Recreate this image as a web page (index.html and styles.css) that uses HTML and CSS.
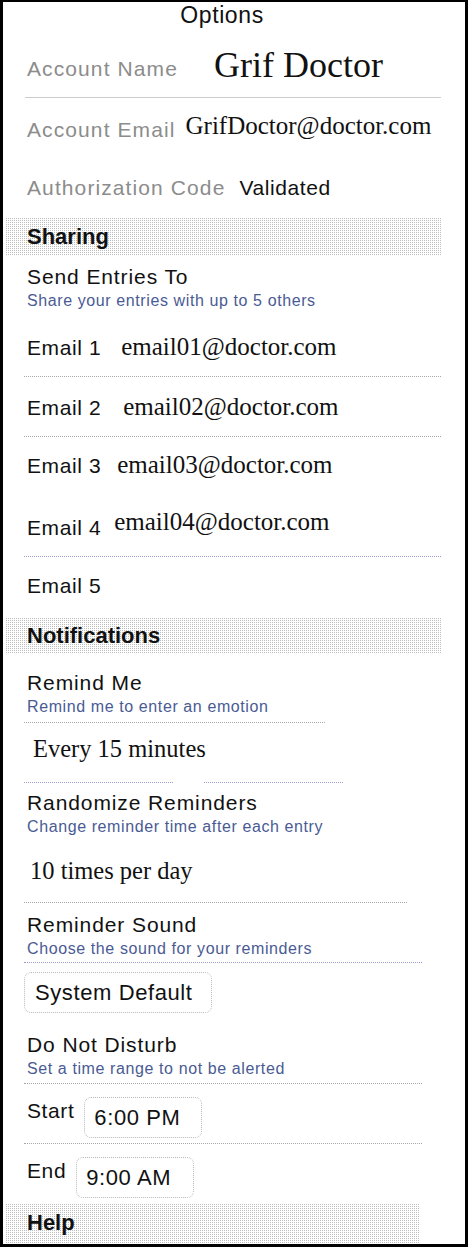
FILE: index.html
```html
<!DOCTYPE html>
<html lang="en">
<head>
    <title>Options</title>
    <link rel="stylesheet" href="styles.css">
</head>
<body>
    <div class="screen">
        <div class="title">Options</div>

        <div class="row row-name">
            <span class="label muted">Account Name</span>
            <span class="value value-name">Grif Doctor</span>
        </div>
        <div class="rule rule-solid"></div>
        <div class="row row-account">
            <span class="label muted">Account Email</span>
            <span class="value value-account">GrifDoctor@doctor.com</span>
        </div>
        <div class="row row-auth">
            <span class="label muted">Authorization Code</span>
            <span class="label value-text">Validated</span>
        </div>

        <div class="section section-sharing">Sharing</div>
        <div class="item item-send">
            <div class="item-title">Send Entries To</div>
            <div class="item-sub">Share your entries with up to 5 others</div>
        </div>
        <div class="row email">
            <span class="label">Email 1</span>
            <span class="value">email01@doctor.com</span>
        </div>
        <div class="rule"></div>
        <div class="row email row-e2">
            <span class="label">Email 2</span>
            <span class="value value-e2">email02@doctor.com</span>
        </div>
        <div class="rule"></div>
        <div class="row email row-e3">
            <span class="label">Email 3</span>
            <span class="value value-e3">email03@doctor.com</span>
        </div>
        <div class="row email">
            <span class="label">Email 4</span>
            <span class="value value-e4">email04@doctor.com</span>
        </div>
        <div class="rule rule-purple"></div>
        <div class="row email row-e5">
            <span class="label">Email 5</span>
        </div>

        <div class="section section-notify">Notifications</div>
        <div class="item item-remind">
            <div class="item-title">Remind Me</div>
            <div class="item-sub">Remind me to enter an emotion</div>
        </div>
        <div class="rule rule-short"></div>
        <div class="choice choice-every">Every 15 minutes</div>
        <div class="rule-pair">
            <div class="rule-part"></div>
            <div class="rule-part rule-part-b"></div>
        </div>
        <div class="item item-random">
            <div class="item-title">Randomize Reminders</div>
            <div class="item-sub">Change reminder time after each entry</div>
        </div>
        <div class="choice choice-times">10 times per day</div>
        <div class="rule rule-mid"></div>
        <div class="item item-sound">
            <div class="item-title">Reminder Sound</div>
            <div class="item-sub">Choose the sound for your reminders</div>
        </div>
        <div class="rule rule-long rule-purple"></div>
        <div class="picker-row">
            <div class="picker">System Default</div>
        </div>
        <div class="item item-dnd">
            <div class="item-title">Do Not Disturb</div>
            <div class="item-sub">Set a time range to not be alerted</div>
        </div>
        <div class="rule rule-long"></div>
        <div class="time-row">
            <span class="label">Start</span>
            <span class="time">6:00 PM</span>
        </div>
        <div class="rule rule-long"></div>
        <div class="time-row">
            <span class="label">End</span>
            <span class="time">9:00 AM</span>
        </div>

        <div class="section section-help">Help</div>
    </div>
</body>
</html>
```

FILE: styles.css
```css
body {
    margin: 0;
    background-color: #fff;
    color: #111;
    font-family: "Liberation Sans", Arial, sans-serif;
}

.screen {
    width: 462px;
    height: 1242px;
    border: 3px solid #000;
    border-top-width: 2px;
    overflow: hidden;
}

.title {
    height: 26px;
    margin-right: 24px;
    font-size: 23px;
    line-height: 26px;
    letter-spacing: 0.6px;
    text-align: center;
}

/* label / value rows */
.row {
    display: flex;
    align-items: flex-start;
    box-sizing: border-box;
    height: 60px;
    padding: 18px 24px 0 24px;
}

.row-name {
    height: 69px;
    padding-top: 27px;
}

.row-account {
    height: 59px;
}

.row-auth {
    padding-top: 17px;
}

.row-e2 {
    height: 59px;
    padding-top: 17px;
}

.row-e3 {
    height: 59px;
    padding-top: 15px;
}

.row-e5 {
    padding-top: 15px;
}

.label {
    font-size: 21px;
    line-height: 28px;
    letter-spacing: 0.6px;
    white-space: nowrap;
}

.muted {
    color: #8c8c8c;
    letter-spacing: 1.1px;
}

.value {
    margin-left: 14px;
    font-family: "Liberation Serif", "Times New Roman", serif;
    font-size: 25px;
    line-height: 26px;
    white-space: nowrap;
}

.value-name {
    margin-left: 36px;
    font-size: 36px;
    line-height: 20px;
}

.value-account {
    margin-left: 10px;
    line-height: 20px;
}

.value-text {
    margin-left: 14px;
}

.email .value {
    margin-left: 20px;
}

.email .value-e2 {
    margin-left: 22px;
}

.email .value-e3 {
    margin-left: 16px;
}

.email .value-e4 {
    margin-left: 13px;
    line-height: 16px;
}

/* section headers */
.section {
    box-sizing: border-box;
    height: 38px;
    margin: 0 24px 0 2px;
    padding: 2px 0 0 22px;
    font-size: 22px;
    font-weight: bold;
    line-height: 36px;
    background: conic-gradient(from 90deg at 1px 1px, #bdbdbd 90deg, #fff 0) 0 0 / 2px 2px;
}

.section-notify {
    height: 37px;
    padding-top: 1px;
}

.section-help {
    height: 41px;
    margin-right: 45px;
}

/* title + subtitle blocks */
.item {
    box-sizing: border-box;
    height: 61px;
    padding: 10px 24px 0 24px;
}

.item-remind {
    height: 68px;
    padding-top: 17px;
}

.item-random {
    height: 56px;
    padding-top: 8px;
}

.item-sound {
    height: 59px;
}

.item-dnd {
    height: 70px;
    padding-top: 20px;
}

.item-title {
    font-size: 21px;
    line-height: 24px;
    letter-spacing: 0.9px;
}

.item-sub {
    color: #4a5b94;
    font-size: 16px;
    line-height: 24px;
    letter-spacing: 0.6px;
}

/* separators */
.rule {
    width: 417px;
    margin-left: 21px;
    border-top: 1px dotted #a9a9a9;
}

.rule-solid {
    width: 416px;
    margin-left: 22px;
    border-top: 1px solid #cdcdcd;
}

.rule-purple {
    border-top-color: #9c9cd4;
}

.rule-short {
    width: 301px;
}

.rule-mid {
    width: 383px;
}

.rule-long {
    width: 398px;
}

.rule-pair {
    display: flex;
    gap: 31px;
    margin-left: 21px;
}

.rule-part {
    width: 149px;
    border-top: 1px dotted #9c9cd4;
}

.rule-part-b {
    width: 139px;
}

/* picked values */
.choice {
    box-sizing: border-box;
    height: 59px;
    padding: 11px 0 0 30px;
    font-family: "Liberation Serif", "Times New Roman", serif;
    font-size: 24.5px;
    line-height: 30px;
}

.choice-times {
    height: 63px;
    padding: 17px 0 0 27px;
}

.picker-row {
    box-sizing: border-box;
    height: 50px;
    padding: 9px 0 0 21px;
}

.picker {
    box-sizing: border-box;
    width: 188px;
    height: 41px;
    padding-left: 10px;
    border: 1px dotted #b9b9b9;
    border-radius: 7px;
    font-size: 22px;
    line-height: 39px;
    letter-spacing: 0.6px;
}

.time-row {
    display: flex;
    align-items: flex-start;
    box-sizing: border-box;
    height: 59px;
    padding: 13px 0 0 24px;
}

.time {
    box-sizing: border-box;
    width: 118px;
    height: 41px;
    margin-left: 10px;
    padding-left: 9px;
    border: 1px dotted #b9b9b9;
    border-radius: 7px;
    font-size: 22px;
    line-height: 39px;
    letter-spacing: 0.6px;
}
```
